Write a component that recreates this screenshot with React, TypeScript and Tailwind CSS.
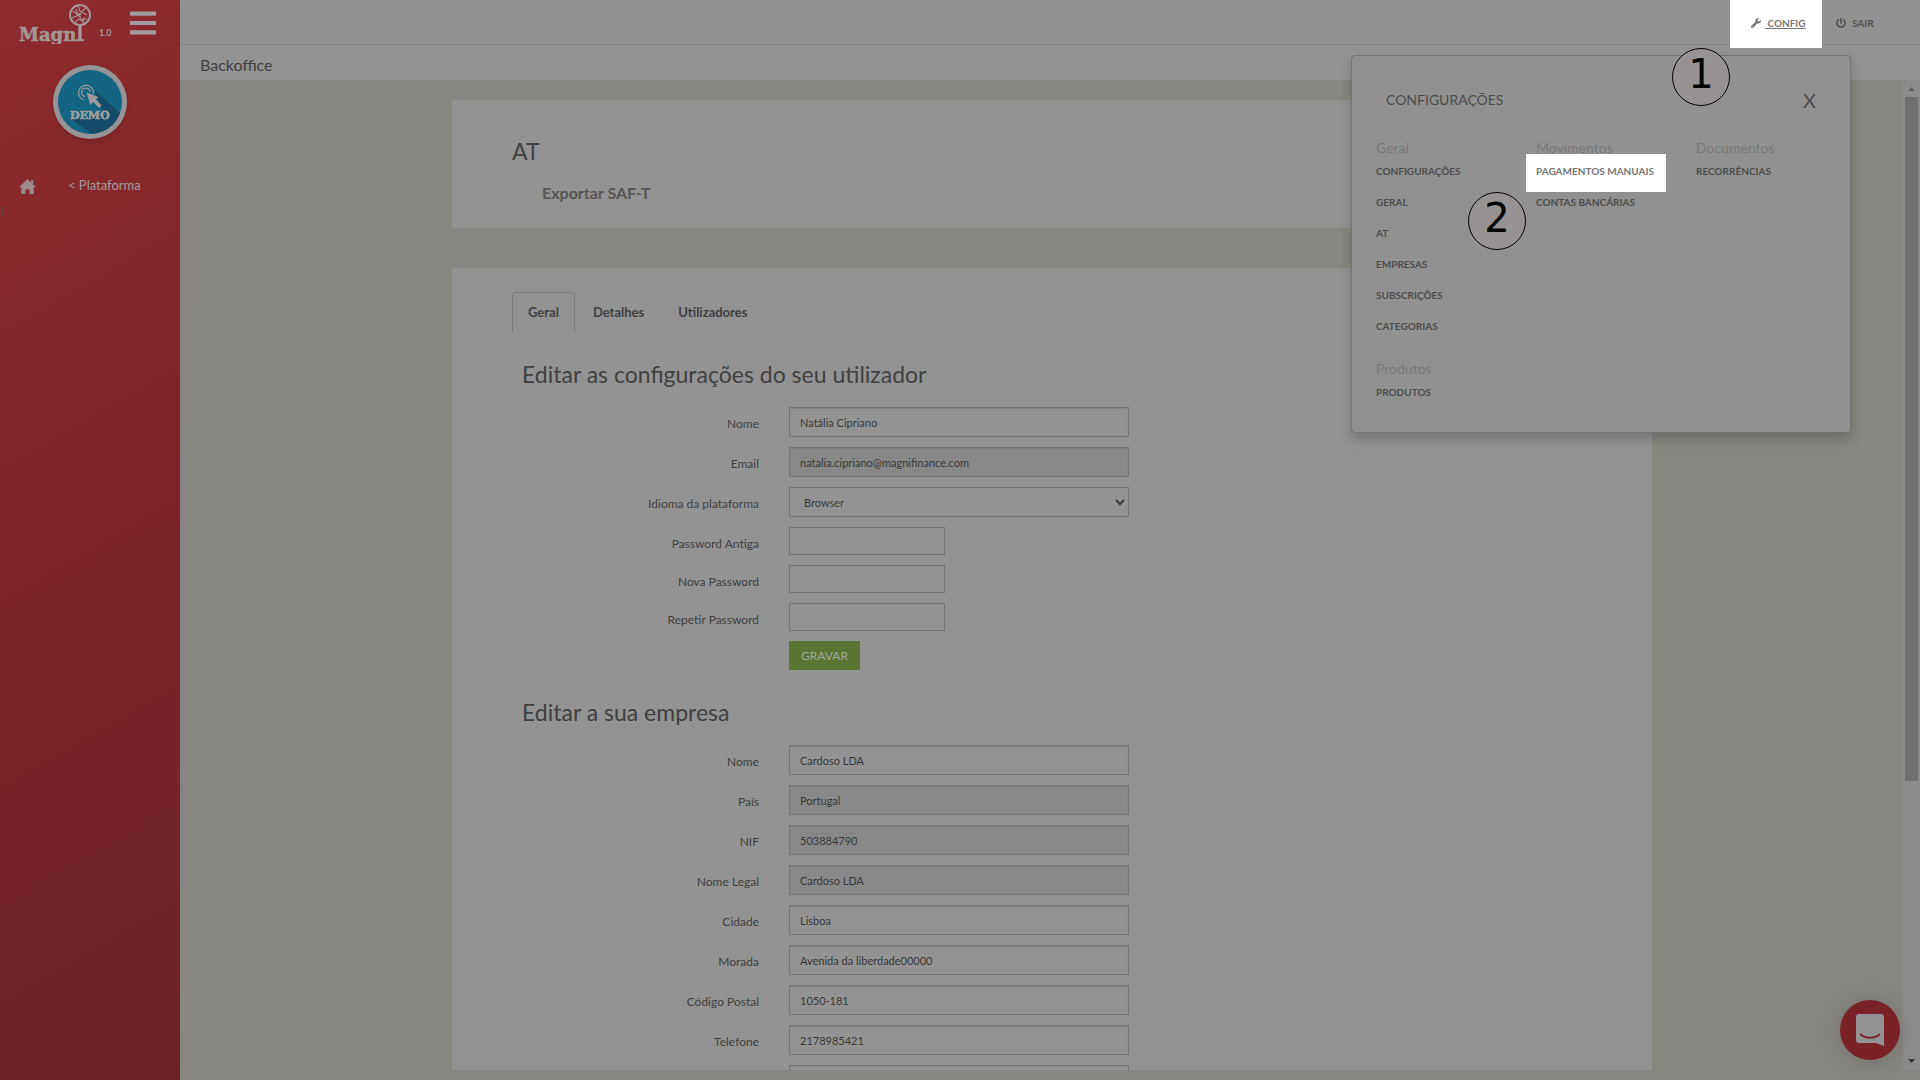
import React from "react";
import { FaBars, FaPowerOff, FaWrench } from "react-icons/fa";

type Field = { id: string; label: string; value?: string; readOnly?: boolean };

const companyFields: Field[] = [
  { id: "company-name", label: "Nome", value: "Cardoso LDA" },
  { id: "company-country", label: "País", value: "Portugal", readOnly: true },
  { id: "company-nif", label: "NIF", value: "503884790", readOnly: true },
  { id: "company-legal", label: "Nome Legal", value: "Cardoso LDA", readOnly: true },
  { id: "company-city", label: "Cidade", value: "Lisboa" },
  { id: "company-address", label: "Morada", value: "Avenida da liberdade00000" },
  { id: "company-zip", label: "Código Postal", value: "1050-181" },
  { id: "company-phone", label: "Telefone", value: "2178985421" },
  { id: "company-fax", label: "", value: "" },
];

const passwordFields: Field[] = [
  { id: "old-password", label: "Password Antiga" },
  { id: "new-password", label: "Nova Password" },
  { id: "repeat-password", label: "Repetir Password" },
];

function Row({ id, label, children }: { id: string; label: string; children: React.ReactNode }) {
  return (
    <div className="flex items-start">
      <label htmlFor={id} className="w-[237px] shrink-0 pt-2 text-right text-xs leading-[18px] text-[#404040]">
        {label}
      </label>
      <div className="ml-[30px] flex">{children}</div>
    </div>
  );
}

function TextField({ id, label, value, readOnly }: Field) {
  return (
    <Row id={id} label={label}>
      <input
        id={id}
        aria-label={label || "Fax"}
        defaultValue={value}
        readOnly={readOnly}
        className={
          "h-[30px] w-[340px] border border-[#747474] px-2.5 text-[11px] text-[#383838] shadow-[inset_0_1px_1px_rgba(0,0,0,0.08)] outline-none " +
          (readOnly ? "bg-[#888]" : "bg-[#939393]")
        }
      />
    </Row>
  );
}

function Logo() {
  return (
    <svg viewBox="0 0 80 44" className="h-11 w-20" role="img" aria-label="Magni">
      <text x="0" y="41" fontSize="18" fontWeight="700" fontFamily="DejaVu Serif, serif" fill="#a39696" stroke="#a39696" strokeWidth="0.500">Magn</text>
      <g fill="none" stroke="#a39696">
        <circle cx="61" cy="15" r="10" strokeWidth="2" />
        <path d="M61 25v15" strokeWidth="3.500" />
        <path d="M57 40.200h8" strokeWidth="2" />
        <path d="M54 11l5 4 8-7M53 18l7-3 3 5 5-1M59 6l2 5 7 4M56 22l4-3 5 3M59 15l-2-6M63 11l-3 6M65 17l-1 6" strokeWidth="1.100" />
      </g>
    </svg>
  );
}

function DemoBadge() {
  return (
    <svg viewBox="0 0 74 74" className="size-[74px] drop-shadow-md" role="img" aria-label="Demo">
      <defs>
        <clipPath id="disc"><circle cx="37" cy="37" r="32" /></clipPath>
      </defs>
      <circle cx="37" cy="37" r="37" fill="#969494" />
      <circle cx="37" cy="37" r="32" fill="#146483" />
      <path d="M40 24L74 54 54 80 18 54 55 50 48 42z" fill="#144c68" clipPath="url(#disc)" />
      <g fill="none" stroke="#969a9c" strokeWidth="1.300">
        <path d="M31 35a7.500 7.500 0 1 1 9.500-6" />
        <path d="M32 31.500a4.200 4.200 0 1 1 5-4.500" />
      </g>
      <path d="M33.500 27.500L45.500 32l-2.800 2.500 6 6-2.600 2.600-6-6-2.600 3.200z" fill="#9c9c9c" />
      <text x="37" y="54" textAnchor="middle" fontSize="11" fontWeight="700" fontFamily="DejaVu Serif, serif" fill="#9c9c9c" stroke="#9c9c9c" strokeWidth="0.700" textRendering="geometricPrecision">DEMO</text>
    </svg>
  );
}

function HomeIcon() {
  return (
    <svg viewBox="0 0 17 15" className="h-[15px] w-[17px]" fill="currentColor" aria-hidden="true">
      <path d="M8.500 0L17 8.300h-2.300V15h-4.200v-4.700h-4V15H2.300V8.300H0z" />
      <path d="M12.200 1h2v4h-2z" />
    </svg>
  );
}

function MenuGroup({ title, items, marked }: { title: string; items: string[]; marked?: string }) {
  return (
    <section>
      <h3 className="text-sm leading-[22px] text-[#787878]">{title}</h3>
      <ul>
        {items.map((item) => (
          <li key={item} className="mb-[7px] flex h-6 items-center">
            <a
              href="#"
              className={
                item === marked
                  ? "mt-1 -ml-2.5 flex h-[38px] shrink-0 items-center bg-white pr-3 pb-1 pl-2.5 text-[10px] font-bold text-[#777]"
                  : "text-[10px] font-bold text-[#4c4c4c]"
              }
            >
              {item}
            </a>
          </li>
        ))}
      </ul>
    </section>
  );
}

function Step({ n, className }: { n: number; className: string }) {
  return (
    <div
      className={
        "absolute z-30 flex size-[58px] items-center justify-center rounded-full border border-black bg-[#979394] pb-1.5 font-['DejaVu_Sans',sans-serif] text-[40px] leading-none text-black " +
        className
      }
    >
      {n}
    </div>
  );
}

function ConfigPanel() {
  return (
    <aside className="absolute top-[55px] right-[69px] z-20 h-[378px] w-[500px] rounded border border-[#747474] bg-[#919191] shadow-[0_6px_12px_rgba(0,0,0,0.2)]">
      <div className="flex h-[81px] items-center justify-between px-[34px] pt-1.5">
        <h2 className="text-sm text-[#4c4c4c]">CONFIGURAÇÕES</h2>
        <button type="button" aria-label="Fechar" className="text-xl text-[#4c4c4c]">X</button>
      </div>
      <div className="grid grid-cols-[160px_160px_1fr] pl-6">
        <div className="flex flex-col gap-[13px]">
          <MenuGroup title="Geral" items={["CONFIGURAÇÕES", "GERAL", "AT", "EMPRESAS", "SUBSCRIÇÕES", "CATEGORIAS"]} />
          <MenuGroup title="Produtos" items={["PRODUTOS"]} />
        </div>
        <MenuGroup title="Movimentos" items={["PAGAMENTOS MANUAIS", "CONTAS BANCÁRIAS"]} marked="PAGAMENTOS MANUAIS" />
        <MenuGroup title="Documentos" items={["RECORRÊNCIAS"]} />
      </div>
      <Step n={1} className="top-[-8px] right-[120px]" />
      <Step n={2} className="top-[136px] left-[116px]" />
    </aside>
  );
}

export default function App() {
  return (
    <div className="relative flex h-screen overflow-hidden bg-[#888680] font-[Lato,sans-serif] text-[#404040]">
      <nav className="w-[180px] shrink-0 bg-linear-150 from-[#8e2a2d] via-[#7d2528] to-[#6b2225]">
        <div className="flex h-[45px] overflow-hidden pl-[19px]">
          <Logo />
          <span className="mt-7 w-[29px] text-[9px] leading-[10px] font-bold text-[#a39696]">1.0</span>
          <button type="button" aria-label="Menu" className="mt-2 h-[30px] text-[30px] text-[#a39c9c]"><FaBars /></button>
        </div>
        <div className="mt-5 flex justify-center"><DemoBadge /></div>
        <div className="mt-9 flex h-[22px] items-center pl-[19px] text-[13px] text-[#a39c9c]">
          <a href="#" aria-label="Início" className="w-[49px] text-[#9a8c8c]"><HomeIcon /></a>
          <a href="#">&lt; Plataforma</a>
        </div>
        <div className="mt-1.5 text-xs text-[#5d4a4a]">{"}"}</div>
      </nav>

      <div className="flex min-w-0 flex-1 flex-col">
        <header className="relative flex h-[45px] shrink-0 justify-end border-b border-[#848484] bg-[#929292] pr-[31px] text-[10px] font-bold text-[#505050]">
          <a href="#" className="z-10 flex h-12 w-[92px] items-center gap-1 bg-white pb-0.5 pl-[21px] text-[#777]">
            <FaWrench /> <span className="whitespace-pre underline">{" CONFIG"}</span>
          </a>
          <a href="#" className="flex h-12 w-[67px] items-center gap-1.5 pb-0.5 pl-3.5"><FaPowerOff /> SAIR</a>
        </header>
        <div className="h-[35px] shrink-0 bg-[#939393] pl-5 text-base leading-[39px]"><h1>Backoffice</h1></div>

        <div className="flex min-h-0 flex-1">
          <main className="min-w-0 flex-1 overflow-hidden pt-5 pl-[21px]">
            <section className="mx-auto h-32 w-full max-w-[1200px] rounded bg-[#939393] px-[60px] pt-[35px]">
              <h2 className="text-[23px] leading-8">AT</h2>
              <a href="#" className="mt-[15px] ml-[30px] block text-base leading-[22px] font-bold text-[#555]">Exportar SAF-T</a>
            </section>

            <section className="mx-auto mt-10 w-full max-w-[1200px] rounded bg-[#939393] px-[60px] pt-6">
              <div role="tablist" className="flex h-10 gap-0.5 text-[13px] font-bold text-[#404040]">
                <button role="tab" aria-selected="true" className="rounded-t border border-b-0 border-[#7c7c7c] px-[15px]">Geral</button>
                <button role="tab" aria-selected="false" className="border-t border-transparent px-4">Detalhes</button>
                <button role="tab" aria-selected="false" className="border-t border-transparent px-4">Utilizadores</button>
              </div>
              <form className="flex flex-col gap-2.5 px-2.5">
                <h2 className="mt-[26px] mb-[7px] text-[23px] leading-8">Editar as configurações do seu utilizador</h2>
                <TextField id="name" label="Nome" value="Natália Cipriano" />
                <TextField id="email" label="Email" value="natalia.cipriano@magnifinance.com" readOnly />
                <Row id="language" label="Idioma da plataforma">
                  <select id="language" className="h-[30px] w-[340px] border border-[#747474] bg-[#939393] px-2.5 text-[11px] text-[#383838]">
                    <option>Browser</option>
                  </select>
                </Row>
                {passwordFields.map((f) => (
                  <Row key={f.id} id={f.id} label={f.label}>
                    <input id={f.id} type="password" className="h-7 w-[156px] border border-[#747474] bg-[#939393] px-2.5" />
                  </Row>
                ))}
                <button type="button" className="ml-[267px] h-[29px] w-[71px] bg-[#5a7431] text-xs text-[#a2a79b]">GRAVAR</button>
                <h2 className="mt-4 mb-[7px] text-[23px] leading-8">Editar a sua empresa</h2>
                {companyFields.map((f) => <TextField key={f.id} {...f} />)}
              </form>
            </section>
          </main>
          <div aria-hidden="true" className="mb-2.5 flex w-[17px] shrink-0 flex-col items-center bg-[#8c8c8c]">
            <svg viewBox="0 0 17 17" className="h-[17px] w-[17px]"><path d="M5 11l3.500-4 3.500 4z" fill="#5c5c5c" /></svg>
            <div className="w-[13px] flex-[684] bg-[#707070]" />
            <div className="flex-[272]" />
            <svg viewBox="0 0 17 17" className="h-[17px] w-[17px]"><path d="M5 6l3.500 4 3.500-4z" fill="#333" /></svg>
          </div>
        </div>
        <div className="-mt-2.5 h-2.5 shrink-0 bg-[#888680]" />
      </div>

      <ConfigPanel />

      <button type="button" aria-label="Chat" className="absolute right-5 bottom-5 z-20 flex size-[60px] items-center justify-center rounded-full bg-[#7a2225] shadow-[0_2px_24px_rgba(0,0,0,0.16)]">
        <svg viewBox="0 0 28 32" className="h-8 w-7">
          <path d="M3 0h22a3 3 0 0 1 3 3v29l-8-3H3a3 3 0 0 1-3-3V3a3 3 0 0 1 3-3z" fill="#939393" />
          <path d="M4.500 20.500c5 4.200 14 4.200 19 0" fill="none" stroke="#7a2225" strokeWidth="1.800" strokeLinecap="round" />
        </svg>
      </button>
    </div>
  );
}
